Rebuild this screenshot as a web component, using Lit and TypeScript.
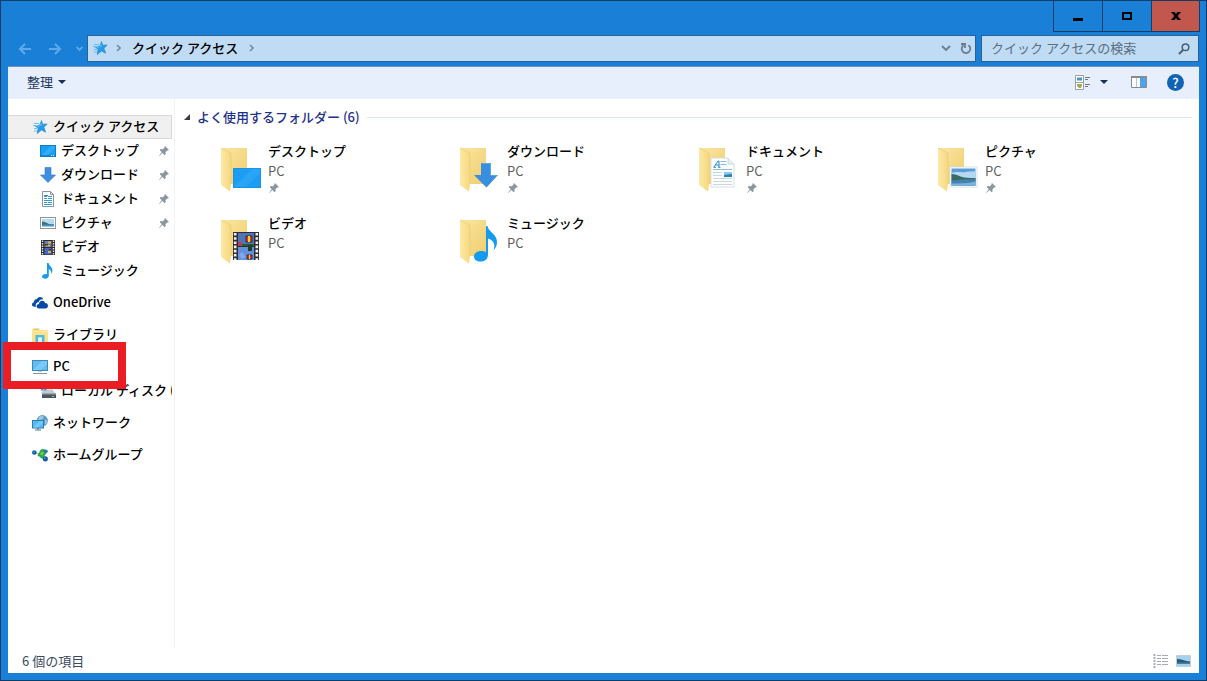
import { LitElement, html, svg, css, nothing, TemplateResult } from "lit";
import { customElement, property } from "lit/decorators.js";

/* ---------- small icons ---------- */

const star = html`<svg width="16" height="16" viewBox="0 0 16 16" aria-hidden="true">
  <path d="M2 4.500h5M1 6.500h3M2 9.500h3M2 12h3" stroke="#6fbdf0" stroke-width="1"/>
  <path d="M9.300 1.200l1.500 4 4.400-.3-3.200 3.400 1.700 4.900-4.200-2.100-4.300 3.500.8-5.200L2.600 7l4.700-1z" fill="#269be8"/>
  <path d="M9.300 1.200l1.500 4 4.400-.3-3.200 3.400 1.700 4.900-4.200-2.100-4.300 3.500.8-5.200" fill="none" stroke="#1877c4" stroke-width=".5"/>
  <path d="M9 3.600l.8 2.600-1.900.9-3.600.3 2.600 1z" fill="#62bdf5"/>
</svg>`;

const pin = html`<svg width="12" height="12" viewBox="0 0 12 12" aria-hidden="true">
  <path d="M7 1l4 4-1.200.6-.6-.2-1.700 1.800.1 2.100-1 .9-2.200-2.300L1.300 11 1 10.700 3.700 7.200 1.700 5l1-.9 2.200.1 1.700-1.700-.2-.6z" fill="#8b979f"/>
</svg>`;

const desktop = html`<svg width="16" height="16" viewBox="0 0 16 16" aria-hidden="true">
  <rect x=".5" y="2.500" width="15" height="11" fill="#19a0f5" stroke="#0d7cc9"/>
  <path d="M1 13L11 3h4v2L6 13z" fill="#32acf8"/>
  <path d="M1 12.500h14" stroke="#1b84cf"/><path d="M11 12.500h1M13 12.500h1" stroke="#d9f0ff"/>
</svg>`;

const download = html`<svg width="16" height="16" viewBox="0 0 16 16" aria-hidden="true">
  <path d="M5 .5h6V8h4.500L8 15.500.500 8H5z" fill="#3d8fdf" stroke="#3079c6" stroke-width=".6"/>
</svg>`;

const documentIcon = html`<svg width="16" height="16" viewBox="0 0 16 16" aria-hidden="true">
  <path d="M2.500.500h8l3 3v12h-11z" fill="#fff" stroke="#8a949b"/>
  <path d="M10.500.500v3h3" fill="none" stroke="#8a949b"/>
  <path d="M4 5.500h3M8 5.500h4M4 7.500h3M8 7.500h4M4 9.500h8M4 11.500h3M8 11.500h4M4 13.500h8" stroke="#3a9bd0"/>
  <path d="M4 4h4v1H4z" fill="#2c86bb"/>
</svg>`;

const picture = html`<svg width="16" height="16" viewBox="0 0 16 16" aria-hidden="true">
  <rect x=".5" y="2.500" width="15" height="11" fill="#fff" stroke="#8e989f"/>
  <path d="M2 4h12v8H2z" fill="#b5dbf3"/>
  <path d="M2 6.500c3 0 5 1.500 7 2.500l5 .5V10H2z" fill="#3f6f73"/>
  <path d="M2 9.500h12V12H2z" fill="#4b90bd"/><path d="M2 11h12v1H2z" fill="#9ccae2"/>
</svg>`;

const video = html`<svg width="16" height="16" viewBox="0 0 16 16" aria-hidden="true">
  <path d="M1 1h14v15H1z" fill="#2c2c30"/>
  <path d="M2.500 1.500v14M13.500 1.500v14" stroke="#e6e6e6" stroke-width="1.400" stroke-dasharray="1.500 1"/>
  <path d="M4.500 2h7v6h-7z" fill="#6b7fae"/><path d="M4.500 9h7v6.500h-7z" fill="#4668c4"/>
  <path d="M8 2.500h3v2H8zM6 6h4v1.500H6zM8 12h3v2H8z" fill="#e2b53a"/>
  <path d="M5 5h3v1.500H5zM9 10h2v1.500H9z" fill="#4b3c2c"/>
</svg>`;

const music = html`<svg width="16" height="16" viewBox="0 0 16 16" aria-hidden="true">
  <path d="M7 0h1.600c.3 2.800 4 4 3.800 7.500-.1 1.700-.8 2.700-1.500 3.500.5-2.300.1-4-2.100-5v6.800c0 1.700-1.500 2.900-3.500 2.900S2 14.900 2 13.600s1.500-2.600 3.500-2.600c.6 0 1.100.1 1.500.2z" fill="#199ce8"/>
</svg>`;

const oneDrive = html`<svg width="16" height="16" viewBox="0 0 16 16" aria-hidden="true">
  <path d="M4.200 11.800H2.600C.9 11.800 0 10.800 0 9.500c0-1.200.8-2.100 1.900-2.300C1.800 5.300 3.300 4 5 4c.5-1.300 1.700-2 3-2 1.600 0 2.700.8 3.200 2.200-2.500-.4-4.200 1-4.600 3-1.900.2-3 1.500-2.900 3 0 .6.200 1.200.5 1.600z" fill="#0a4aa6"/>
  <path d="M6.800 13.500c-1.400 0-2.300-1-2.300-2.200 0-1.300 1-2.200 2.400-2.300.1-2 1.500-3.300 3.200-3.300 1.500 0 2.600.8 3 2.200 1.800 0 2.900 1.200 2.900 2.800s-1.100 2.800-2.700 2.800z" fill="#0a4aa6"/>
</svg>`;

const library = html`<svg width="16" height="16" viewBox="0 0 16 16" aria-hidden="true">
  <path d="M0 2.500h1l1-1.500h5l1 2h8v13H0z" fill="#fbe189"/>
  <path d="M1.500 2.500h5" stroke="#e9c562"/><path d="M0 4.500h16" stroke="#fdeaa9"/>
  <path d="M3.500 8h9v8H10v-5.500H6V16H3.500z" fill="#4fb9e2"/>
  <path d="M6 10.500h4V16H6z" fill="#d9eff0"/>
</svg>`;

const computer = html`<svg width="16" height="16" viewBox="0 0 16 16" aria-hidden="true">
  <rect x=".5" y="1.500" width="15" height="10" fill="#5fbdf4" stroke="#3f87b8"/>
  <path d="M1 11L10 2h5v3L9 11z" fill="#7acaf8"/>
  <path d="M6 12h4v1H6z" fill="#c3d0d9"/><path d="M1 14.500h14" stroke="#7f97a8"/>
</svg>`;

const disk = html`<svg width="16" height="16" viewBox="0 0 16 16" aria-hidden="true">
  <path d="M3.500 6.500h9L15 10H1z" fill="#c5ccd1"/><path d="M2 10h14v5H2z" fill="#4d565c"/>
  <path d="M2 10h14v1.500H2z" fill="#9aa4ab"/><path d="M12 13h2v1h-2z" fill="#5ff06a"/>
  <path d="M1 2h2.500v2.500H1zM4 2h2.500v2.500H4zM1 5h2.500v2.500H1zM4 5h2.500v2.500H4z" fill="#2e9be6"/>
</svg>`;

const network = html`<svg width="16" height="16" viewBox="0 0 16 16" aria-hidden="true">
  <circle cx="10.300" cy="5.700" r="5.600" fill="#5c9fc6"/>
  <path d="M7 2c2-1.500 4-1 4.500 0s-1 2-2 2.500-2.500 0-3.500 1zM13 5c1.500 0 2 .5 2 1.500s-1 2.500-2 3z" fill="#9fcadd"/>
  <rect x=".5" y="5.500" width="11" height="7.500" fill="#56b9f2" stroke="#2b7db5"/>
  <path d="M1 12.500L8 6h3v2l-5 4.500z" fill="#74c8f7"/>
  <path d="M5 13h2v1.500H5z" fill="#6b8292"/><path d="M3 15h6" stroke="#5b7a90"/>
</svg>`;

const homeGroup = html`<svg width="16" height="16" viewBox="0 0 16 16" aria-hidden="true">
  <path d="M2.500 5.500L8 7" stroke="#8fb3a6" fill="none" stroke-width=".8"/>
  <path d="M11.500 2C9.500 1.800 8 3 7.500 5L5.500 8c.3 1 1 1.500 2 1.500.7 1.500 2.500 2.500 5 2.500V8.500c1.500-1 2-2.500 1.500-4S13 2.200 11.500 2z" fill="#2fa648"/>
  <path d="M9.500 4.500l2.500 1-1.500 3-2.500-1z" fill="#62d163"/>
  <circle cx="2.300" cy="5.500" r="2.300" fill="#155c9e"/>
  <circle cx="13.800" cy="4.300" r="1.900" fill="#2c79ae"/><circle cx="13.300" cy="11.800" r="2.600" fill="#155c9e"/>
  <circle cx="12.700" cy="11.200" r=".8" fill="#5ea5df"/><circle cx="1.900" cy="5" r=".7" fill="#5ea5df"/>
</svg>`;

/* ---------- folder tiles ---------- */

const overlays: Record<string, TemplateResult> = {
  desktop: svg`<rect x="13" y="22" width="28" height="20" fill="#1b9df3"/>
    <path d="M13 42L33 22h8v4L25 42z" fill="#2aa5f6"/>
    <path d="M13.500 22.500h27v19h-27z" fill="none" stroke="#1a93e6"/>`,
  download: svg`<path d="M22 17h10v12h7L27.500 41.500 15 29h7z" fill="#3a8ee0"/>
    <path d="M22.500 17.500h9v12h6.500" fill="none" stroke="#5ba6ec"/>`,
  document: svg`<path d="M13 12h17l6 6v23H13z" fill="#fcfdfe" stroke="#d3d9dd" stroke-width=".8"/>
    <path d="M30 12v6h6" fill="#e8eef3" stroke="#c3cbd1" stroke-width=".7"/>
    <path d="M16 21l4-6h1v6M17.500 19h3.500M15.500 21.300h2.500M20 21.300h2.500" fill="none" stroke="#2789c6" stroke-width="1"/>
    <path d="M22.500 15.500h6M22.500 18.500h6M15 23.500h19" stroke="#87bfe0"/>
    <path d="M26 26h8v5h-8z" fill="#2d7fb2"/><path d="M26 26h8v2l-8 1z" fill="#8cc9ea"/>
    <path d="M15 26.500h9M15 29.500h9M15 32.500h19M15 35.500h19M15 38.500h19" stroke="#ccd6dd"/>`,
  picture: svg`<rect x="13" y="21" width="27" height="20" fill="#fff" stroke="#cfdce6" stroke-width=".8"/>
    <path d="M14.500 22.500h24v17h-24z" fill="#5a9fdc"/>
    <path d="M14.500 27c6-2 10 0 14-1s7 0 10-1v8h-24z" fill="#b4d9f1"/>
    <path d="M14.500 28c3 0 6 1 9 2.500s8 1.500 15 1.500v3h-24z" fill="#3b6a62"/>
    <path d="M14.500 34.500c8-1 16-1.500 24-1.500v6.500h-24z" fill="#4084b4"/><path d="M14.500 37.500c8 0 16 0 24-2v4h-24z" fill="#7db4d6"/>`,
  video: svg`<path d="M13 14h26v28H13z" fill="#2d2d33"/>
    <path d="M15.200 15v27M36.800 15v27" stroke="#f2f2f2" stroke-width="2.600" stroke-dasharray="2.600 1.600"/>
    <path d="M18 15h16v13H18z" fill="#4f74b8"/><path d="M18 29h16v13H18z" fill="#6490dc"/>
    <path d="M26 18h6v6h-6zM27 37h5v4h-5z" fill="#d83a22" stroke="#2b2320" stroke-width=".8"/><path d="M28 18h2v6h-2zM29 37h1v4h-1z" fill="#f7d33d"/>
    <path d="M22 26h12v2H22z" fill="#26602c"/><path d="M18 24h4v4h-4z" fill="#b83d57"/>
    <path d="M28 27h4v6h-4z" fill="#203f2a"/><path d="M19 37l3-3 4 5-4 2z" fill="#84a9e8"/>`,
  music: svg`<path d="M27 8h1.500c.8 6 9.500 8 9.500 16 0 3.500-1.200 6-3.500 8.500 2-6 .5-10-5.500-12v16c0 4.500-3 7-7.500 7-4 0-6.500-2-6.500-5s3-5.500 7-5.500c2 0 3.600.4 5 1z" fill="#149bef"/>`,
};

const folder = (kind: string) => html`<svg width="42" height="48" viewBox="0 0 42 48" aria-hidden="true">
  <defs>
    <linearGradient id="back" x1="0" x2="1" y1="0" y2="1"><stop offset="0" stop-color="#fbe6a4"/><stop offset="1" stop-color="#efcd6c"/></linearGradient>
    <linearGradient id="flap" x1="0" x2="1"><stop offset="0" stop-color="#fde9a6"/><stop offset="1" stop-color="#f6d87f"/></linearGradient>
  </defs>
  <path d="M1 2h26v36H8z" fill="url(#back)"/>
  <path d="M1 2l10 5v31l-1 7.500L1 39z" fill="url(#flap)"/>
  <path d="M1 2l10 5v31" fill="none" stroke="#ecca74" stroke-width=".7"/>
  ${overlays[kind]}
</svg>`;

const caret = html`<svg width="8" height="4" viewBox="0 0 8 4" aria-hidden="true"><path d="M0 0h8L4 4z" fill="#1c2f55"/></svg>`;
const crumb = html`<svg width="5" height="8" viewBox="0 0 5 8" aria-hidden="true"><path d="M1 1l3 3-3 3" fill="none" stroke="#7a8c9c" stroke-width="1.600"/></svg>`;

interface NavEntry {
  label: string;
  icon: TemplateResult;
  child?: boolean;
  pinned?: boolean;
  selected?: boolean;
  marked?: boolean;
}

const navGroups: NavEntry[][] = [
  [
    { label: "クイック アクセス", icon: star, selected: true },
    { label: "デスクトップ", icon: desktop, child: true, pinned: true },
    { label: "ダウンロード", icon: download, child: true, pinned: true },
    { label: "ドキュメント", icon: documentIcon, child: true, pinned: true },
    { label: "ピクチャ", icon: picture, child: true, pinned: true },
    { label: "ビデオ", icon: video, child: true },
    { label: "ミュージック", icon: music, child: true },
  ],
  [{ label: "OneDrive", icon: oneDrive }],
  [{ label: "ライブラリ", icon: library }],
  [
    { label: "PC", icon: computer, marked: true },
    { label: "ローカル ディスク (C:)", icon: disk, child: true },
  ],
  [{ label: "ネットワーク", icon: network }],
  [{ label: "ホームグループ", icon: homeGroup }],
];

const folders = [
  { name: "デスクトップ", kind: "desktop", pinned: true },
  { name: "ダウンロード", kind: "download", pinned: true },
  { name: "ドキュメント", kind: "document", pinned: true },
  { name: "ピクチャ", kind: "picture", pinned: true },
  { name: "ビデオ", kind: "video", pinned: false },
  { name: "ミュージック", kind: "music", pinned: false },
];

const reset = css`
  * { box-sizing: border-box; }
  svg { display: block; flex: none; }
  button { font: inherit; color: inherit; background: none; border: 0; padding: 0; margin: 0; }
  a { color: inherit; text-decoration: none; }
  ul { list-style: none; margin: 0; padding: 0; }
`;

@customElement("window-header")
class WindowHeader extends LitElement {
  static styles = [reset, css`
    :host { display: block; }
    .title { display: flex; justify-content: flex-end; height: 31px; margin-right: -1px; }
    .control { display: flex; align-items: center; justify-content: center; width: 49px; border: 1px solid #123f68; border-top: 0; border-right: 0; }
    .close { background: #c1574d; border-right: 1px solid #123f68; }
    .bar { display: flex; align-items: center; gap: 5px; padding-bottom: 1px; height: 34px; }
    .history { display: flex; align-items: center; gap: 16px; padding-left: 10px; width: 74px; }
    .history .recent { margin-left: -2px; }
    .field { display: flex; align-items: center; height: 27px; background: #c0dbf4; border: 1px solid #2b6296; }
    .address { flex: 1; padding: 0 3px 0 4px; font-weight: 500; }
    .path { display: flex; align-items: center; gap: 10px; flex: 1; padding-bottom: 2px; }
    .path .quick { margin-right: -2px; }
    .path button { padding: 0 1px; }
    .tools { display: flex; align-items: center; gap: 9px; }
    .search { width: 218px; padding: 0 8px 0 9px; }
    .search input { flex: 1; min-width: 0; border: 0; padding: 0 0 2px; background: none; font: inherit; outline: none; }
    .search input::placeholder { color: #5a6d7e; opacity: 1; }
  `];

  render() {
    return html`
      <div class="title">
        <button class="control" aria-label="最小化"><svg width="10" height="12" viewBox="0 0 10 12"><path d="M0 8h10v3H0z" fill="#000"/></svg></button>
        <button class="control" aria-label="最大化"><svg width="10" height="8" viewBox="0 0 10 8"><path d="M1 1h8v6H1z" fill="none" stroke="#000" stroke-width="2"/></svg></button>
        <button class="control close" aria-label="閉じる"><svg width="10" height="8" viewBox="0 0 10 8"><path d="M0 0h3.500l1.500 2 1.500-2H10L6.700 4 10 8H6.500L5 6 3.500 8H0l3.300-4z" fill="#000"/></svg></button>
      </div>
      <div class="bar">
        <div class="history">
          <button aria-label="戻る"><svg width="14" height="12" viewBox="0 0 14 12"><path d="M13 6H2M7 1L2 6l5 5" fill="none" stroke="#5fa9e6" stroke-width="2"/></svg></button>
          <button aria-label="進む"><svg width="14" height="12" viewBox="0 0 14 12"><path d="M1 6h11M7 1l5 5-5 5" fill="none" stroke="#5fa9e6" stroke-width="2"/></svg></button>
          <button class="recent" aria-label="最近表示した場所"><svg width="7" height="6" viewBox="0 0 7 6"><path d="M.5 1l3 3 3-3" fill="none" stroke="#5fa9e6" stroke-width="1.800"/></svg></button>
        </div>
        <div class="field address">
          <div class="path"><span class="quick">${star}</span>${crumb}<button>クイック アクセス</button>${crumb}</div>
          <div class="tools">
            <button aria-label="以前の場所"><svg width="10" height="7" viewBox="0 0 10 7"><path d="M1 1l4 4 4-4" fill="none" stroke="#6b7d8d" stroke-width="1.800"/></svg></button>
            <button aria-label="最新の情報に更新"><svg width="12" height="13" viewBox="0 0 12 13"><path d="M3.500 3.300a4.300 4.300 0 105 0M1 2h4v4" fill="none" stroke="#6b7d8d" stroke-width="1.800"/></svg></button>
          </div>
        </div>
        <label class="field search">
          <input type="text" aria-label="検索" placeholder="クイック アクセスの検索">
          <svg width="12" height="12" viewBox="0 0 12 12" aria-hidden="true"><circle cx="7.500" cy="4.300" r="3.300" fill="none" stroke="#4c5f70" stroke-width="1.500"/><path d="M5 7L1 11" stroke="#4c5f70" stroke-width="2"/></svg>
        </label>
      </div>`;
  }
}

@customElement("command-bar")
class CommandBar extends LitElement {
  static styles = [reset, css`
    :host { display: flex; align-items: center; justify-content: space-between; height: 33px; padding: 0 15px 2px 19px; background: #e7effd; border-top: 1px solid #6f93b8; }
    .organize { display: flex; align-items: center; gap: 5px; color: #1e395b; }
    .tools { display: flex; align-items: center; }
    .views { display: flex; align-items: center; gap: 10px; margin-right: 23px; }
    .preview { margin-right: 20px; }
    .help { width: 17px; height: 17px; border-radius: 50%; background: #1263b4; color: #fff; font-weight: 500; line-height: 17px; text-align: center; }
  `];

  render() {
    return html`
      <button class="organize">整理 ${caret}</button>
      <div class="tools">
        <button class="views" aria-label="表示方法の変更">
          <svg width="15" height="15" viewBox="0 0 15 15"><path d="M.5.500h8v14h-8zM.5 7.500h8" fill="#fff" stroke="#9aa0a0"/><path d="M2 2.500h5v3H2z" fill="#4b95c6"/><path d="M2 9h5v1l-1 3H4L2 11z" fill="#a3a653"/><path d="M10 2.500h5M10 4.500h3M10 9.500h5M10 11.500h3" stroke="#6d7a88"/></svg>
          ${caret}
        </button>
        <button class="preview" aria-label="プレビュー ウィンドウ">
          <svg width="16" height="12" viewBox="0 0 16 12"><path d="M.5.500h15v11H.5z" fill="#fff" stroke="#858c93"/><path d="M0 0h16v2H0z" fill="#858c93"/><path d="M5.500 2v9" stroke="#b8c0c8"/><path d="M9 2h6v9H9z" fill="#4da3e8"/></svg>
        </button>
        <button class="help" aria-label="ヘルプ">?</button>
      </div>`;
  }
}

@customElement("nav-pane")
class NavPane extends LitElement {
  static styles = [reset, css`
    :host { display: block; padding-top: 16px; border-right: 1px solid #eff3f8; font-weight: 500; color: #000; }
    .group { margin-bottom: 8px; }
    .row { position: relative; margin-right: 2px; }
    .entry { display: flex; align-items: center; gap: 5px; height: 24px; padding-left: 24px; }
    .child { padding-left: 32px; }
    .selected { background: #f0f0f0; box-shadow: inset -1px 0 #d9d9d9, inset 0 1px #d9d9d9, inset 0 -1px #d9d9d9; }
    .label { flex: 1; min-width: 0; padding-bottom: 2px; overflow: hidden; white-space: nowrap; }
    .pin { padding-right: 2px; }
    .mark { position: absolute; z-index: 1; left: -5px; top: -13px; width: 123px; height: 47px; border: 8px solid #ea1c24; pointer-events: none; }
  `];

  render() {
    return html`<nav aria-label="ナビゲーション">
      ${navGroups.map((group) => html`<ul class="group">
        ${group.map((entry) => html`<li class="row">
          <a href="#" class="entry ${entry.child ? "child" : ""} ${entry.selected ? "selected" : ""}">
            ${entry.icon}<span class="label">${entry.label}</span>
            ${entry.pinned ? html`<span class="pin">${pin}</span>` : nothing}
          </a>
          ${entry.marked ? html`<span class="mark"></span>` : nothing}
        </li>`)}
      </ul>`)}
    </nav>`;
  }
}

@customElement("folder-tile")
class FolderTile extends LitElement {
  @property() name = "";
  @property() kind = "";
  @property({ type: Boolean }) pinned = false;

  static styles = [reset, css`
    :host { display: block; height: 72px; }
    .tile { display: flex; gap: 6px; }
    .icon { padding-top: 5px; }
    .text { display: flex; flex-direction: column; line-height: 20px; }
    .name { color: #000; font-weight: 500; }
    .place { color: #5f5f5f; }
    .pin { padding-top: 1px; }
  `];

  render() {
    return html`<a class="tile" href="#">
      <span class="icon">${folder(this.kind)}</span>
      <span class="text">
        <span class="name">${this.name}</span>
        <span class="place">PC</span>
        ${this.pinned ? html`<span class="pin">${pin}</span>` : nothing}
      </span>
    </a>`;
  }
}

@customElement("app-root")
class AppRoot extends LitElement {
  static styles = [reset, css`
    :host { display: block; font: 13px/20px "Noto Sans CJK JP", sans-serif; }
    .window { display: flex; flex-direction: column; min-height: 100vh; padding: 0 7px 7px; background: #1a80d7; border: 1px solid #0e3e68; }
    .content { display: flex; flex-direction: column; flex: 1; background: #fff; }
    .panes { display: flex; flex: 1; }
    .nav { flex: none; width: 167px; }
    .files { flex: 1; min-width: 0; padding: 8px 7px 0 9px; }
    .heading { display: flex; align-items: center; gap: 7px; margin: 0; font-size: 13px; font-weight: 500; color: #1e3287; }
    .rule { flex: 1; height: 1px; background: #dbe7f2; }
    .grid { display: grid; grid-template-columns: repeat(auto-fill, 239px); padding: 14px 0 0 36px; }
    .status { display: flex; align-items: center; justify-content: space-between; height: 25px; padding: 0 8px 0 14px; color: #3a4a63; }
    .modes { display: flex; align-items: center; gap: 8px; }
  `];

  render() {
    return html`<div class="window">
      <window-header></window-header>
      <div class="content">
        <command-bar></command-bar>
        <div class="panes">
          <nav-pane class="nav"></nav-pane>
          <main class="files">
            <h2 class="heading">
              <svg width="6" height="6" viewBox="0 0 6 6" aria-hidden="true"><path d="M6 0v6H0z" fill="#3a3a3a"/></svg>
              <span>よく使用するフォルダー (6)</span><span class="rule"></span>
            </h2>
            <div class="grid">
              ${folders.map((f) => html`<folder-tile .name=${f.name} .kind=${f.kind} .pinned=${f.pinned}></folder-tile>`)}
            </div>
          </main>
        </div>
        <footer class="status">
          <span>6 個の項目</span>
          <span class="modes">
            <button aria-label="詳細表示"><svg width="15" height="14" viewBox="0 0 15 14"><path d="M1.500 0v14" stroke="#a9aeb3" stroke-width="2" stroke-dasharray="2 1"/><path d="M4 1.500h4M9 1.500h6M4 4.500h4M9 4.500h6M4 7.500h4M9 7.500h6M4 10.500h4M9 10.500h6" stroke="#a5abb0"/></svg></button>
            <button aria-label="縮小版表示"><svg width="15" height="12" viewBox="0 0 15 12"><path d="M.5.500h14v11H.5z" fill="#fff" stroke="#c1ced9"/><path d="M1 1h13v10H1z" fill="#a5d0ee"/><path d="M1 4c4 0 8 2 13 2.500V8H1z" fill="#2c5c6c"/><path d="M1 7.500h13V9H1z" fill="#3b82ae"/></svg></button>
          </span>
        </footer>
      </div>
    </div>`;
  }
}
